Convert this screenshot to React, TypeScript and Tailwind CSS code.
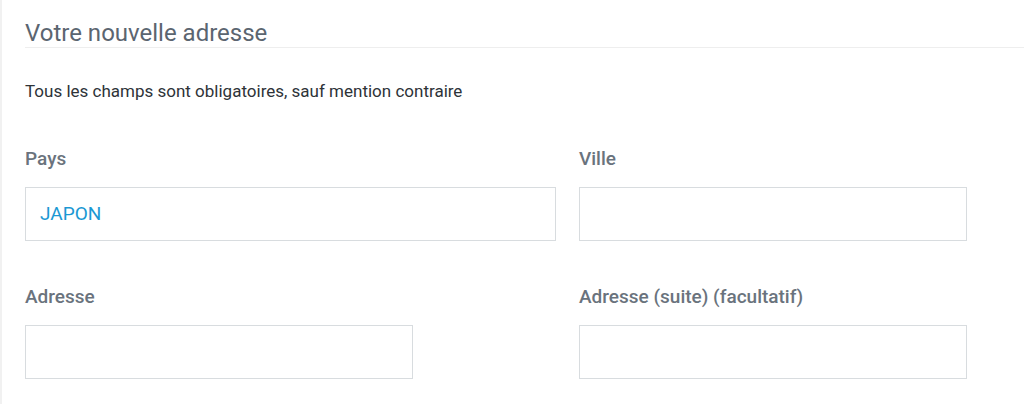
import React from 'react';

const font = { fontFamily: 'Roboto, "Liberation Sans", sans-serif' };

function Field({ label, value, wide }: { label: string; value?: string; wide?: boolean }) {
  return (
    <div className="flex flex-col">
      <label className="text-[19px] leading-[18px] font-medium text-[#6a737d]">{label}</label>
      <div
        className={`mt-[19px] h-[54px] border border-[#d8dcdf] bg-white flex items-center px-[14px] ${
          wide ? 'w-full' : 'w-[388px]'
        }`}
      >
        {value && <span className="text-[19px] text-[#1b98d3]">{value}</span>}
      </div>
    </div>
  );
}

export default function App() {
  return (
    <div className="w-[1024px] h-[404px] overflow-hidden bg-white border-l-2 border-[#f1f1f1]" style={font}>
      <div className="pl-[23px] pt-[20px]">
        <h2 className="text-[24px] leading-[27px] text-[#5b6570] border-b border-[#eeeeee]">
          Votre nouvelle adresse
        </h2>
        <p className="mt-[33px] text-[17px] leading-[20px] text-[#2e3338]">
          Tous les champs sont obligatoires, sauf mention contraire
        </p>
        <div className="mt-[49px] grid grid-cols-[531px_531px] gap-x-[23px] gap-y-[47px]">
          <Field label="Pays" value="JAPON" wide />
          <Field label="Ville" />
          <Field label="Adresse" />
          <Field label="Adresse (suite) (facultatif)" />
        </div>
      </div>
    </div>
  );
}
